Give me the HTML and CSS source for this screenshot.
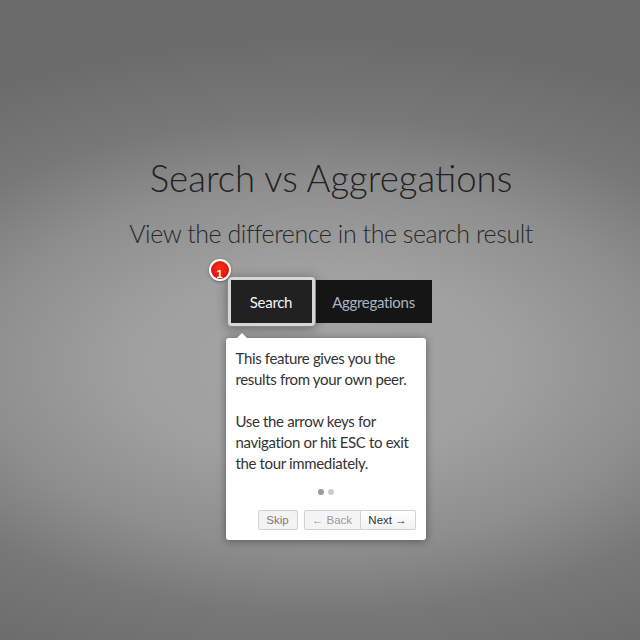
FILE: index.html
```html
<!DOCTYPE html>
<html>
<head>
<meta charset="utf-8">
<link rel="stylesheet" href="styles.css">
</head>
<body>
<main class="page">
  <h1 class="title">Search vs Aggregations</h1>
  <h2 class="subtitle">View the difference in the search result</h2>
  <div class="tabs">
    <div class="highlight">
      <span class="helper"></span>
      <span class="badge">1</span>
      <button class="tab tab-active">Search</button>
      <div class="tooltip">
        <span class="arrow"></span>
        <p class="tip-text">This feature gives you the<br>results from your own peer.<br><br>Use the arrow keys for<br>navigation or hit ESC to exit<br>the tour immediately.</p>
        <div class="bullets"><span class="dot dot-on"></span><span class="dot"></span></div>
        <div class="actions">
          <button class="btn btn-skip">Skip</button>
          <div class="btn-pair">
            <button class="btn btn-back">&larr; Back</button>
            <button class="btn btn-next">Next &rarr;</button>
          </div>
        </div>
      </div>
    </div>
    <button class="tab tab-agg">Aggregations</button>
  </div>
</main>
</body>
</html>
```
FILE: styles.css
```css
html, body {
  margin: 0;
  padding: 0;
  height: 100%;
}
body {
  background-color: #6a6a6a;
  background-image: radial-gradient(ellipse 620px 330px at 50% 365px, #a5a5a5 0%, #a0a0a0 30%, #8e8e8e 55%, #787878 75%, #6b6b6b 100%);
  font-family: Lato, "Open Sans", sans-serif;
  color: #2a2a2a;
  overflow: hidden;
}
.page {
  display: flex;
  flex-direction: column;
  align-items: center;
  padding-top: 154px;
  padding-left: 22px;
}
.title {
  margin: 0;
  font-weight: 300;
  font-size: 36.6px;
  line-height: 48px;
  color: #222;
}
.subtitle {
  margin: 14px 0 0;
  font-weight: 300;
  font-size: 25px;
  letter-spacing: -0.45px;
  line-height: 34px;
  color: #2a2a2a;
}
.tabs {
  display: flex;
  gap: 4px;
  margin-top: 30px;
}
.highlight {
  position: relative;
  display: flex;
}
.helper {
  position: absolute;
  left: -4px;
  top: -4px;
  right: -4px;
  bottom: -4px;
  background: #d6d6d6;
  border: 1px solid #8a8a8a;
  border-radius: 4px;
  box-sizing: border-box;
  box-shadow: 0 2px 12px rgba(0,0,0,0.35);
}
.badge {
  position: absolute;
  left: -22px;
  top: -21px;
  width: 18px;
  height: 18px;
  border: 2px solid #fff;
  border-radius: 50%;
  background: radial-gradient(circle at 50% 40%, #ff3019 0%, #cf0404 100%);
  color: #fff;
  font-family: "Liberation Sans", Arial, sans-serif;
  font-weight: bold;
  font-size: 11px;
  line-height: 26px;
  text-align: center;
  overflow: hidden;
  box-shadow: 0 1px 3px rgba(0,0,0,0.4);
  z-index: 2;
}
.tab {
  position: relative;
  border: 0;
  margin: 0;
  height: 43px;
  padding: 0;
  background: #151515;
  color: #a9b4c0;
  font-family: Lato, "Open Sans", sans-serif;
  font-size: 15px;
  letter-spacing: -0.3px;
}
.tab-agg {
  width: 116px;
}
.tab-active {
  background: #212121;
  color: #f4f4f4;
  width: 81px;
}
.tooltip {
  position: absolute;
  left: -5px;
  top: 58px;
  width: 200px;
  box-sizing: border-box;
  padding: 10px;
  background: #fff;
  border-radius: 3px;
  box-shadow: 0 1px 8px rgba(0,0,0,0.4);
  z-index: 3;
}
.arrow {
  position: absolute;
  left: 11px;
  top: -10px;
  border: 5px solid transparent;
  border-bottom-color: #fff;
}
.tip-text {
  margin: 0;
  font-size: 15px;
  letter-spacing: -0.35px;
  line-height: 21px;
  color: #333;
  white-space: nowrap;
}
.bullets {
  display: flex;
  justify-content: center;
  gap: 4px;
  padding-top: 15px;
}
.dot {
  width: 6px;
  height: 6px;
  border-radius: 50%;
  background: #ccc;
}
.dot-on {
  background: #999;
}
.actions {
  display: flex;
  justify-content: flex-end;
  gap: 6px;
  margin-top: 15px;
}
.btn-pair {
  display: flex;
}
.btn {
  margin: 0;
  height: 20px;
  padding: 0;
  border: 1px solid #d3d3d3;
  border-radius: 2px;
  background: linear-gradient(#ffffff, #f2f2f2);
  color: #333;
  font-family: "Liberation Sans", Arial, sans-serif;
  font-size: 11.5px;
  line-height: 18px;
}
.btn-skip {
  color: #7a7a7a;
  background: #f3f3f3;
  width: 40px;
}
.btn-back {
  color: #9a9a9a;
  border-radius: 2px 0 0 2px;
  width: 57px;
  background: #f4f4f4;
}
.btn-next {
  border-left: 0;
  border-radius: 0 2px 2px 0;
  width: 55px;
}
```
